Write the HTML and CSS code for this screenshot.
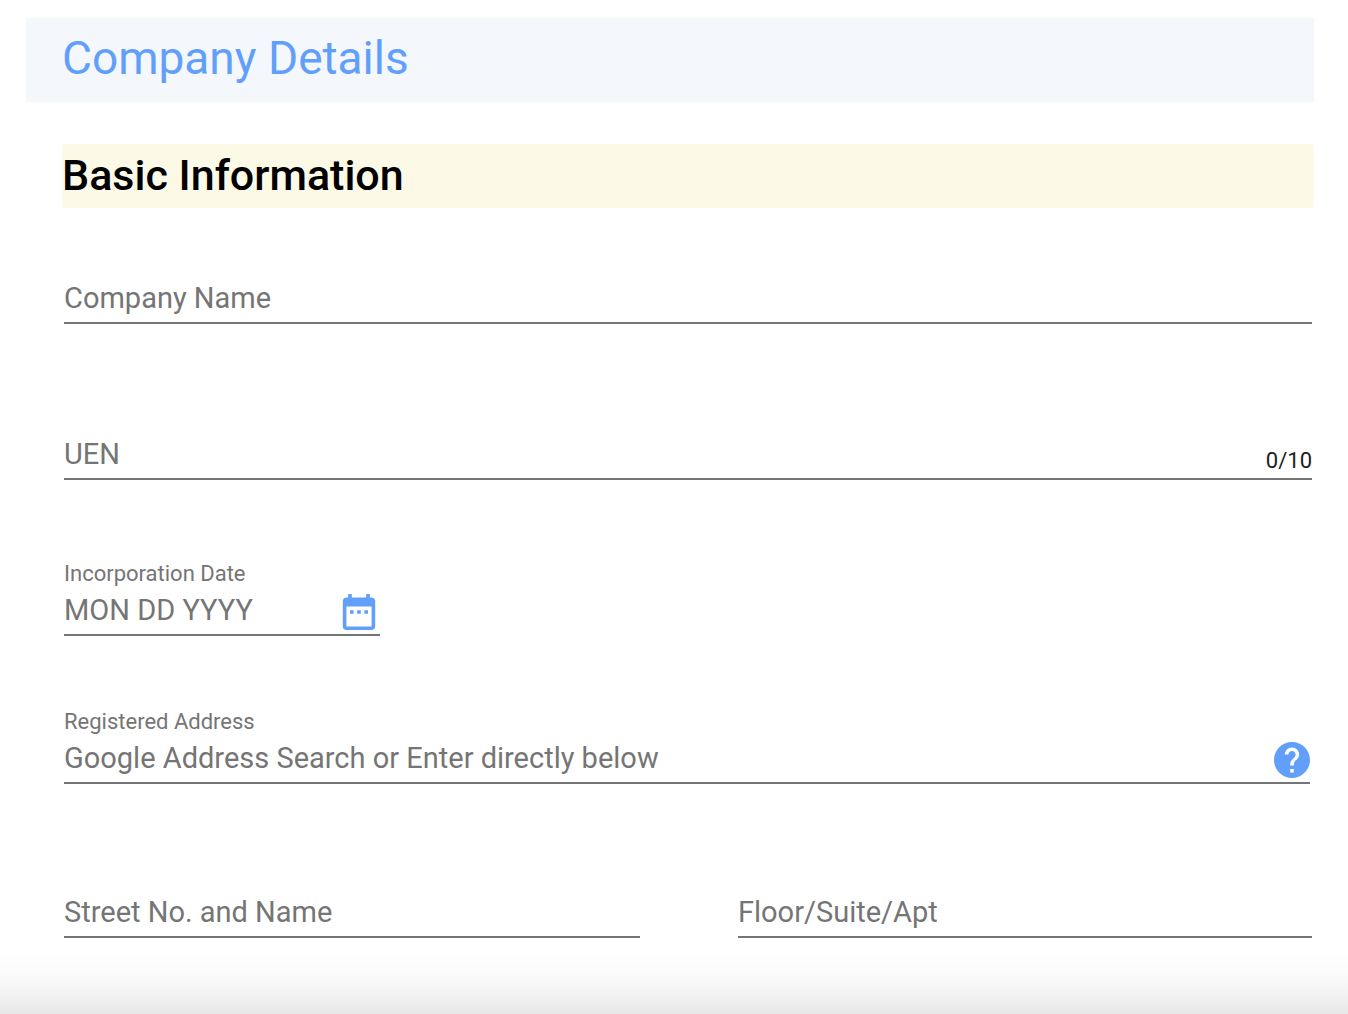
FILE: index.html
```
<!DOCTYPE html>
<html lang="en">
<head>
<meta charset="utf-8">
<title>Company Details</title>
<link rel="stylesheet" href="styles.css">
</head>
<body>
<main class="page">
  <h1 class="page-title">Company Details</h1>
  <form class="form">
    <h2 class="section-title">Basic Information</h2>
    <div class="field field-first">
      <div class="control">
        <input class="input" type="text" placeholder="Company Name" aria-label="Company Name">
      </div>
    </div>
    <div class="field field-uen">
      <div class="control">
        <input class="input" type="text" placeholder="UEN" aria-label="UEN" maxlength="10">
        <span class="counter">0/10</span>
      </div>
    </div>
    <div class="field field-date">
      <label class="label" for="date">Incorporation Date</label>
      <div class="control">
        <input class="input" type="text" id="date" placeholder="MON DD YYYY">
        <button class="icon-button" type="button" aria-label="Open calendar">
          <svg class="icon" viewBox="2 2 20 20"><path d="M9 11H7v2h2v-2zm4 0h-2v2h2v-2zm4 0h-2v2h2v-2zm2-7h-1V2h-2v2H8V2H6v2H5c-1.110 0-1.990.9-1.990 2L3 20c0 1.100.89 2 2 2h14c1.100 0 2-.9 2-2V6c0-1.100-.9-2-2-2zm0 16H5V9h14v11z"/></svg>
        </button>
      </div>
    </div>
    <div class="field field-address">
      <label class="label" for="address">Registered Address</label>
      <div class="control">
        <input class="input" type="text" id="address" placeholder="Google Address Search or Enter directly below">
        <button class="icon-button" type="button" aria-label="Help">
          <svg class="icon" viewBox="2 2 20 20"><path d="M12 2C6.480 2 2 6.480 2 12s4.480 10 10 10 10-4.480 10-10S17.520 2 12 2zm1 17h-2v-2h2v2zm2.070-7.750l-.9.920C13.450 12.900 13 13.500 13 15h-2v-.5c0-1.100.45-2.100 1.170-2.830l1.240-1.260c.37-.36.590-.86.590-1.410 0-1.100-.9-2-2-2s-2 .9-2 2H8c0-2.210 1.790-4 4-4s4 1.790 4 4c0 .88-.36 1.680-.93 2.250z"/></svg>
        </button>
      </div>
    </div>
    <div class="row">
      <div class="field">
        <div class="control">
          <input class="input" type="text" placeholder="Street No. and Name" aria-label="Street No. and Name">
        </div>
      </div>
      <div class="field">
        <div class="control">
          <input class="input" type="text" placeholder="Floor/Suite/Apt" aria-label="Floor/Suite/Apt">
        </div>
      </div>
    </div>
  </form>
</main>
</body>
</html>
```

FILE: styles.css
```
* { box-sizing: border-box; }

body {
  margin: 0;
  min-height: 100vh;
  font-family: Roboto, "Liberation Sans", sans-serif;
  color: #212121;
  background: linear-gradient(to top, #e8e8e8 0, #f5f5f5 24px, #fcfcfc 44px, #fff 64px);
}

.page { padding: 18px 34px 76px 26px; }

.page-title {
  margin: 0;
  padding: 0 36px 4px;
  line-height: 80px;
  font-size: 46px;
  font-weight: 400;
  color: #629ffa;
  background: #f4f8fc;
}

.form { padding: 42px 0 0 36px; }

.section-title {
  margin: 0;
  padding-bottom: 2px;
  line-height: 62px;
  font-size: 43px;
  font-weight: 500;
  color: #000;
  background: #fcf9e7;
  border-radius: 2px;
}

.field {
  margin: 0 2px;
  border-bottom: 2px solid #757575;
}

.field-first { margin-top: 66px; }
.field-uen { margin-top: 106px; }
.field-date { width: 316px; margin-top: 82px; }
.field-address { margin-top: 74px; margin-right: 4px; }

.control {
  display: flex;
  align-items: center;
}

.input {
  flex: 1;
  min-width: 0;
  height: 48px;
  padding: 0;
  border: 0;
  outline: 0;
  background: none;
  font: 400 29px/34px Roboto, "Liberation Sans", sans-serif;
  color: #212121;
}

.input::placeholder { color: #757575; opacity: 1; }

.label {
  display: block;
  line-height: 24px;
  font-size: 22px;
  color: #757575;
}

.counter {
  padding-top: 14px;
  font-size: 22px;
  line-height: 26px;
}

.icon-button {
  display: flex;
  align-self: flex-end;
  padding: 0 0 4px;
  border: 0;
  background: none;
  color: #629ffa;
}

.field-date .icon-button { padding-right: 3px; }

.icon { width: 36px; height: 36px; fill: currentColor; }

.row {
  display: grid;
  grid-template-columns: 580fr 578fr;
  column-gap: 94px;
  margin-top: 104px;
}
```
